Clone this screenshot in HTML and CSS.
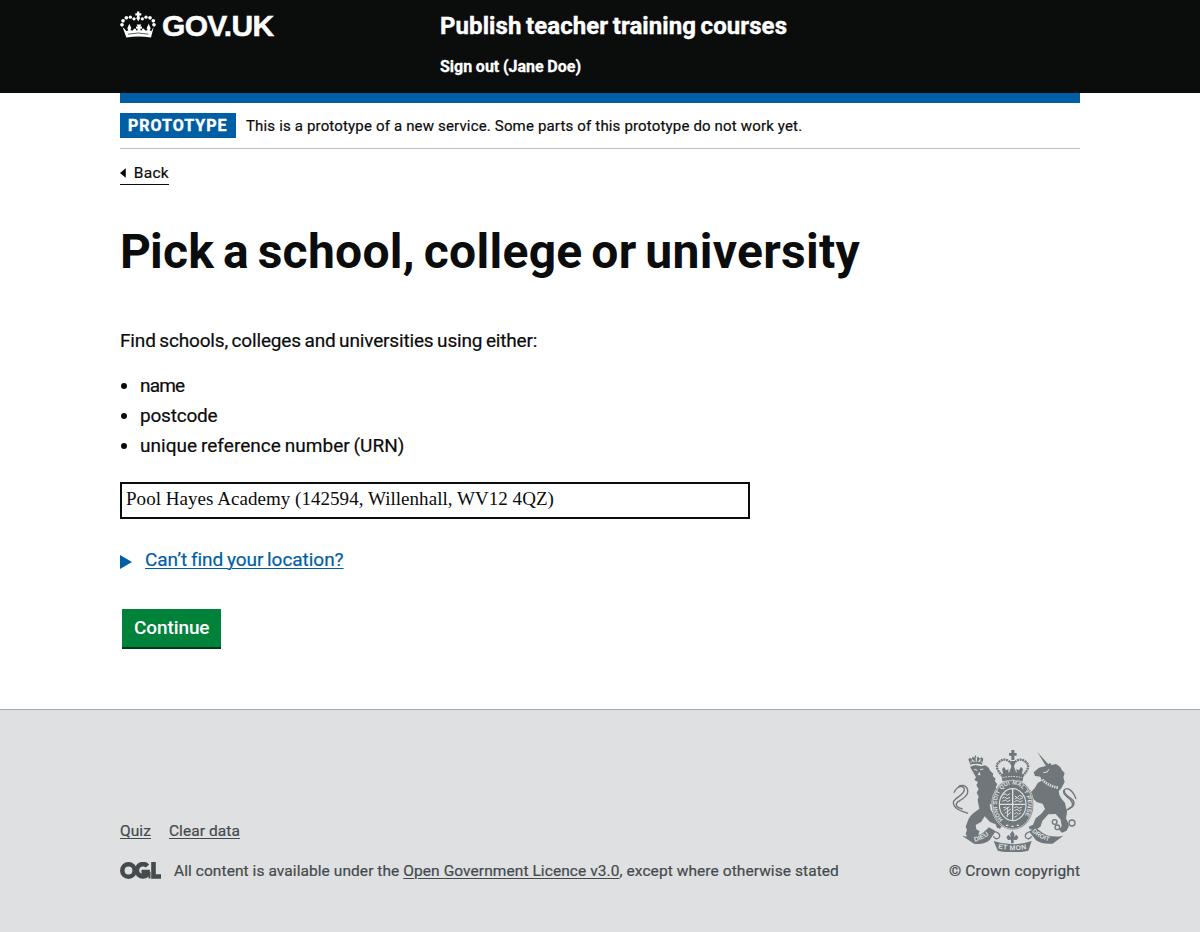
FILE: index.html
```html
<!DOCTYPE html>
<html lang="en">
<head>
<meta charset="utf-8">
<title>Pick a school, college or university</title>
<link rel="stylesheet" href="styles.css">
</head>
<body>
<header class="header">
  <div class="container header-row">
    <a class="logo" href="#">
      <svg class="crown" viewBox="30 35 108 80" fill="#fff">
        <path d="M81 36h7v5h6v7h-6l2 8-5 9-6-9 3-8h-6v-7h5z"/>
        <circle cx="72" cy="58" r="5"/><circle cx="61" cy="53" r="5"/><circle cx="49" cy="55" r="5.500"/><circle cx="39" cy="64" r="5.500"/><circle cx="36" cy="76" r="5.500"/>
        <circle cx="97" cy="58" r="5"/><circle cx="108" cy="53" r="5"/><circle cx="120" cy="55" r="5.500"/><circle cx="130" cy="64" r="5.500"/><circle cx="132" cy="76" r="5.500"/>
        <path d="M38 83q7 4 11 12l6-3-3-6 6-13 6 13-3 6 7 1 5-6 4 1 2 5 4-1-1-5-4 1v-7l5 1-3-7h14l-3 7 5-1v7l-4-1-1 5 4 1 2-5 4-1 5 6 7-1-3-6 6-13 6 13-3 6 5 3q3-8 7-12l-8 31q-37-6-74 0z"/>
        <path d="M54 104q31-7 61 0" stroke="#0b0c0c" stroke-width="2" fill="none"/>
      </svg>
      <span class="logo-text">GOV.UK</span>
    </a>
    <div class="header-content">
      <a class="service" href="#">Publish teacher training courses</a>
      <a class="signout" href="#">Sign out (Jane Doe)</a>
    </div>
  </div>
</header>
<div class="container">
  <div class="phase">
    <strong class="tag">PROTOTYPE</strong>
    <span class="phase-text">This is a prototype of a new service. Some parts of this prototype do not work yet.</span>
  </div>
  <a class="back" href="#"><svg class="back-arrow" viewBox="0 0 6 10"><path d="M0 5l6-5v10z"/></svg><span>Back</span></a>
  <main>
    <h1 class="title">Pick a school, college or university</h1>
    <p class="intro">Find schools, colleges and universities using either:</p>
    <ul class="list">
      <li class="item name">name</li>
      <li class="item postcode">postcode</li>
      <li class="item urn">unique reference number (URN)</li>
    </ul>
    <input class="search" type="text" value="Pool Hayes Academy (142594, Willenhall, WV12 4QZ)">
    <div class="details">
      <svg class="details-arrow" viewBox="0 0 12 14"><path d="M0 0l12 7-12 7z" fill="#005ea5"/></svg>
      <a class="details-link" href="#">Can’t find your location?</a>
    </div>
    <button class="button"><span>Continue</span></button>
  </main>
</div>
<footer class="footer">
  <div class="container footer-row">
    <div class="footer-meta">
      <div class="footer-links"><a class="quiz" href="#">Quiz</a><a class="clear" href="#">Clear data</a></div>
      <div class="licence">
        <svg class="ogl" viewBox="0 0 41 17" fill="none" stroke="#454a4c" stroke-width="4.6">
          <circle cx="8.5" cy="8.5" r="6.2"/>
          <path d="M27.5 4A6.200 6.200 0 1 0 27.6 12.500V10H21.500"/>
          <path d="M29.5 10V16.5" stroke-width="2"/>
          <path d="M33.5 0V14.5H41"/>
        </svg>
        <span class="licence-text">All content is available under the <a href="#">Open Government Licence v3.0</a>, except where otherwise stated</span>
      </div>
    </div>
    <a class="copyright" href="#">
      <svg class="crest" viewBox="33 30 378 306">
        <defs>
          <path id="garter" d="M189 239A46 59 0 1 1 245 239"/>
          <path id="dieu" d="M104 305Q132 300 160 274"/>
          <path id="motto" d="M174 325Q218 336 266 325"/>
          <path id="droit" d="M275 275Q302 300 340 307"/>
        </defs>
        <g fill="#6f777b">
          <!-- lion -->
          <path d="M91 74l-6-16 5-5 5 4 3-7 5 3 3-9 4 9 5-3 4 6 5-4 6 4-4 18q-17-5-35 0z"/>
          <path d="M90 80l16-5 17 4 13-3 10 7 5 10 9 8-2 7 9 8-3 7 8 10-5 9 7 9 9 5q-4 12-12 20l6 12 9 5-2 15-12-1-16-12-7-4 3 19 12 17 13 15 8 5 1 11-6 8-9-3-4-10-17-7-16-17-10 16-17 10 2 13 10 6-4 8 6 8 10 8-3 6-18 2-9-9-18-4-6-12 4-11-4-10 6-16q5-16 19-26l16-12-3-15-2-12 3-9-6-12 6-11-7-11 5-10-11-6 5-8z"/>
          <!-- unicorn -->
          <path d="M292 36l35 39-8 5z"/>
          <path d="M320 77l10-9 5 7 13-3 12 8 6 11 8 8-4 13 4 14-10 19-8 9q1 12 7 20l12 15 6 28-3 18 8 17-6 20-14 6-9-9 8-10-3-20-15-17-22 1-18 20-6 18-18 9-14-2-3-8 13-6 8-19 17-14 11-14-7-16-17-4-20-18-10 8-9-2 8-10-5-12-8 9-9-9 5-13 13-4 9 7 9 12 10-10 9-16 12-7-4-12-16-2-4-11 16-14z"/>
          <!-- ribbon -->
          <path d="M66 287q37 8 63-9 10-8 18-16l20 12-18 26q-17 15-47 11z"/>
          <path d="M370 287q-37 8-63-9-11-8-20-17l-19 14 20 26q20 13 50 10z"/>
          <path d="M161 303q56 20 114 0l-10 29q-46 11-92 0z"/>
          <ellipse cx="218" cy="194" rx="63" ry="76" stroke="#dee0e2" stroke-width="2"/>
          <path d="M184 102q34-12 67 0l-3 22q-30-9-61 0z"/>
          <path d="M214 30h9v9h7v8h-7v13h-9V47h-7v-8h7z"/>
          <path d="M211 63h15l-4 17 7 18h-22l7-18zM192 80l6 11 8-4-2 15h-14l-4-14zM243 80l-6 11-8-4 2 15h14l4-14z"/>
          <path d="M217 272l7 11-3 9 8-8 6 8-5 8-9-1v11h-8v-11l-9 1-5-8 6-8 8 8-3-9z"/>
        </g>
        <g fill="none" stroke="#6f777b" stroke-width="4">
          <path d="M188 108q-27-26-12-41 21-18 38 4M247 108q27-26 12-41-21-18-38 4" stroke-width="7" stroke-dasharray="6 2"/>
          <path d="M84 220c-20-7-44-13-44-33 3-15 34-20 33-39-2-14-22-11-31 10"/>
          <path d="M68 207c-17-4-25-11-15-21 13-8 36-20 29-39-6-14-19-12-27-7"/>
          <path d="M368 215c20-6 37-16 26-32-8-11-26-17-23-30 5-14 27-7 37 24"/>
          <path d="M384 207c25-9 20-24 9-31-9-8-23-13-20-27"/>
          <path d="M161 274q22 4 17 18-9 10-18-3M274 274q-22 4-17 18 9 10 18-3"/>
          <circle cx="344" cy="246" r="7"/><circle cx="352" cy="262" r="7"/><circle cx="376" cy="258" r="8"/><circle cx="396" cy="249" r="9"/>
        </g>
        <g fill="none" stroke="#dee0e2">
          <ellipse cx="218" cy="194" rx="59" ry="73" stroke-width="2"/>
          <ellipse cx="218" cy="194" rx="40" ry="48" stroke-width="3.500"/>
          <path d="M218 147v94M180 193h76" stroke-width="4"/>
          <path d="M187 166l8-5 7 5 8-5M186 175l7-4 8 5 9-4M187 184l9-4 7 5 8-5M224 168l8 5 7-7 9 4M224 177l8-4 7 5 10-5M223 185l9-4 8 5 8-4M199 201l-9 2M209 200l-18 11M213 207l-19 13M213 217l-14 11M203 201v30M223 203l7-3 7 5 9-4M223 212l8-4 7 5 7-4M223 222l7-4 6 5 7-5M223 232l9-5" stroke-width="3"/>
          <path d="M102 88l10 3M120 89l10-2M310 98l12-2 4-8" stroke-width="3"/>
          <path d="M118 96l-4 9h7z" fill="#dee0e2"/>
          <path d="M307 119q19 20 48 24" stroke-width="8" stroke-dasharray="4 3"/>
          <path d="M91 67q18-6 36 0M188 113q29-7 58 0" stroke-width="3" stroke-dasharray="5 3"/>
          <path d="M96 59l4 5M109 52v10M122 58l-4 5M198 256h7M214 259h7M230 256h7" stroke-width="4"/>
        </g>
        <g class="crest-text">
          <text font-size="17"><textPath href="#garter" textLength="252">HONI SOIT QUI MAL Y PENSE</textPath></text>
          <text font-size="20"><textPath href="#dieu">DIEU</textPath></text>
          <text font-size="21"><textPath href="#motto" textLength="86">ET MON</textPath></text>
          <text font-size="19"><textPath href="#droit">DROIT</textPath></text>
        </g>
      </svg>
      <span class="copy-text">© Crown copyright</span>
    </a>
  </div>
</footer>
</body>
</html>
```
FILE: styles.css
```css
* { box-sizing: border-box; }
body { margin: 0; background: #fff; color: #0b0c0c; font-family: Roboto, "Liberation Sans", sans-serif; font-size: 19px; }
a { color: inherit; text-underline-offset: 2px; text-decoration-thickness: 1px; }
span, a { white-space: nowrap; }
.container { width: 960px; margin: 0 auto; }
.header { height: 93px; background: #0b0c0c; color: #fff; }
.header a { text-decoration: none; }
.header-row { display: flex; }
.logo { display: flex; width: 320px; gap: 6px; padding-top: 11px; }
.crown { width: 36px; height: 27px; }
.logo-text { font: bold 30px/30px "Liberation Sans", sans-serif; letter-spacing: -0.7px; -webkit-text-stroke: 0.5px #fff; }
.header-content { display: flex; flex-direction: column; align-items: flex-start; padding-top: 11px; }
.service { font-size: 24px; font-weight: 700; line-height: 30px; letter-spacing: 0.08px; word-spacing: -1.5px; -webkit-text-stroke: 0.4px #fff; }
.signout { margin-top: 16px; font-size: 16px; font-weight: 700; line-height: 20px; word-spacing: -0.3px; -webkit-text-stroke: 0.3px #fff; }
.phase { display: flex; align-items: center; height: 56px; border-top: 10px solid #005ea5; border-bottom: 1px solid #bfc1c3; }
.tag { width: 116px; height: 25px; padding-left: 8px; background: #005ea5; color: #fff; font-size: 16px; line-height: 25px; letter-spacing: 1px; -webkit-text-stroke: 0.4px #fff; }
.phase-text { margin-left: 10px; font-size: 15px; letter-spacing: 0.165px; -webkit-text-stroke: 0.2px; }
.back { display: flex; align-items: center; width: 49px; height: 22px; margin-top: 14px; padding-bottom: 2px; border-bottom: 1px solid #0b0c0c; font-size: 15.5px; letter-spacing: 0.3px; text-decoration: none; -webkit-text-stroke: 0.2px; }
.back-arrow { width: 6px; height: 10px; margin-right: 8px; }
.title { margin: 42px 0 0; font-size: 48px; line-height: 50px; font-weight: 700; letter-spacing: 0.3px; word-spacing: -3.5px; white-space: nowrap; }
.title::first-letter { letter-spacing: -1px; }
.intro { margin: 51px 0 0; line-height: 25px; letter-spacing: -0.16px; word-spacing: -1px; -webkit-text-stroke: 0.2px; }
.list { margin: 18px 0 0; padding-left: 20px; -webkit-text-stroke: 0.2px; }
.item { line-height: 30px; }
.name { letter-spacing: -0.8px; }
.postcode { letter-spacing: -0.2px; }
.urn { letter-spacing: 0.04px; word-spacing: -1px; }
.search { display: block; width: 630px; height: 37px; margin: 21px 0 0; padding: 0 4px 4px; border: 2px solid #0b0c0c; border-radius: 0; background: #fff; color: #0b0c0c; font: 19px "Liberation Serif", serif; letter-spacing: 0.04px; }
.details { display: flex; align-items: center; height: 25px; margin-top: 29px; color: #005ea5; }
.details-arrow { width: 12px; height: 14px; margin: 3px 13px 0 0; }
.details-link { margin-bottom: 2px; letter-spacing: -0.04px; word-spacing: -1px; -webkit-text-stroke: 0.2px; }
.button { display: block; width: 99px; height: 40px; margin: 36px 0 0 2px; padding: 0 12px 1px; border: 0; border-bottom: 2px solid #003618; background: #00823b; color: #fff; font: 500 19px Roboto, sans-serif; letter-spacing: -0.1px; text-align: left; }
.footer { height: 223px; margin-top: 60px; border-top: 1px solid #a1acb2; background: #dee0e2; color: #454a4c; font-size: 15.5px; -webkit-text-stroke: 0.2px; }
.footer-row { display: flex; justify-content: space-between; padding-top: 40px; }
.footer-meta { padding-top: 71px; }
.footer-links { display: flex; gap: 18px; line-height: 20px; letter-spacing: 0.07px; }
.licence { display: flex; align-items: center; height: 20px; margin-top: 20px; letter-spacing: 0.07px; }
.ogl { width: 41px; height: 17px; margin: -2px 13px 0 0; }
.copyright { display: flex; flex-direction: column; width: 131px; text-decoration: none; line-height: 20px; letter-spacing: 0.17px; }
.crest { width: 126px; height: 102px; margin: 0 0 9px 2px; letter-spacing: 0; }
.crest-text { fill: #dee0e2; font-family: "Liberation Sans", sans-serif; font-weight: bold; }
```
